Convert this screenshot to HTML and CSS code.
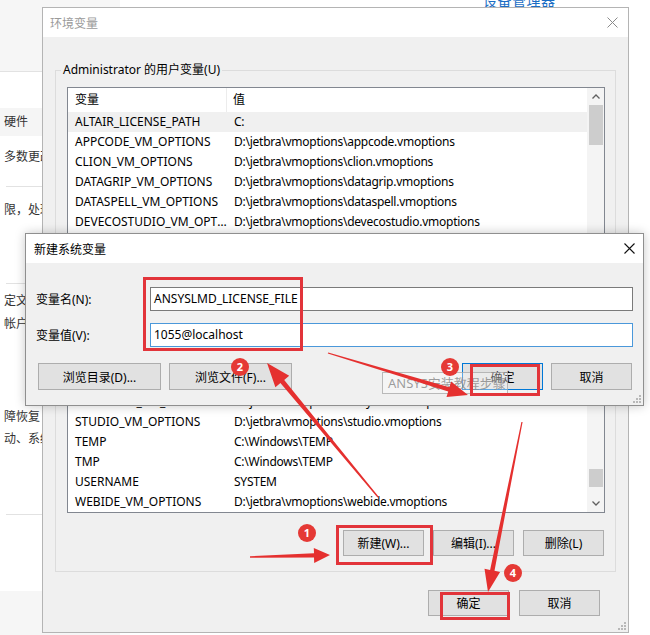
FILE: index.html
```html
<!DOCTYPE html>
<html lang="zh-CN">
<head>
<meta charset="utf-8">
<title>环境变量</title>
<link rel="stylesheet" href="styles.css">
</head>
<body>
<div class="desktop">
  <div class="side">
    <div class="side-top"></div>
    <div class="side-band">硬件</div>
    <div class="side-row r42">多数更改</div>
    <div class="side-line l8"></div>
    <div class="side-row r46">限，处理</div>
    <div class="side-line l50"></div>
    <div class="side-row r22 m6">定文件</div>
    <div class="side-row r24">帐户</div>
    <div class="side-row r22 m70">障恢复</div>
    <div class="side-row r22">动、系统</div>
    <div class="side-line l64"></div>
    <div class="side-foot"></div>
  </div>

  <div class="top-link">设备管理器</div>

  <div class="win win-main">
    <div class="titlebar inactive">
      <span class="title">环境变量</span>
      <svg class="close" width="11" height="11" viewBox="0 0 11 11"><path d="M0.5 0.5L10.5 10.5M10.5 0.5L0.5 10.5" stroke="#8a8a8a" stroke-width="1"/></svg>
    </div>
    <div class="win-body main-body">
      <fieldset class="group">
        <legend>Administrator 的用户变量(U)</legend>
        <div class="listbox">
          <div class="list-main">
            <div class="lrow head"><span class="c1">变量</span><span class="c2">值</span></div>
            <div class="lrow sel"><span class="c1">ALTAIR_LICENSE_PATH</span><span class="c2">C:</span></div>
            <div class="lrow"><span class="c1">APPCODE_VM_OPTIONS</span><span class="c2">D:\jetbra\vmoptions\appcode.vmoptions</span></div>
            <div class="lrow"><span class="c1">CLION_VM_OPTIONS</span><span class="c2">D:\jetbra\vmoptions\clion.vmoptions</span></div>
            <div class="lrow"><span class="c1">DATAGRIP_VM_OPTIONS</span><span class="c2">D:\jetbra\vmoptions\datagrip.vmoptions</span></div>
            <div class="lrow"><span class="c1">DATASPELL_VM_OPTIONS</span><span class="c2">D:\jetbra\vmoptions\dataspell.vmoptions</span></div>
            <div class="lrow"><span class="c1">DEVECOSTUDIO_VM_OPTIONS</span><span class="c2">D:\jetbra\vmoptions\devecostudio.vmoptions</span></div>
            <div class="lrow"><span class="c1">GATEWAY_VM_OPTIONS</span><span class="c2">D:\jetbra\vmoptions\gateway.vmoptions</span></div>
            <div class="lrow"><span class="c1">GOLAND_VM_OPTIONS</span><span class="c2">D:\jetbra\vmoptions\goland.vmoptions</span></div>
            <div class="lrow"><span class="c1">IDEA_VM_OPTIONS</span><span class="c2">D:\jetbra\vmoptions\idea.vmoptions</span></div>
            <div class="lrow"><span class="c1">JETBRAINSCLIENT_VM_OPTIONS</span><span class="c2">D:\jetbra\vmoptions\jetbrainsclient.vmoptions</span></div>
            <div class="lrow"><span class="c1">JETBRAINS_CLIENT_VM_OPTIONS</span><span class="c2">D:\jetbra\vmoptions\jetbrains_client.vmoptions</span></div>
            <div class="lrow"><span class="c1">PHPSTORM_VM_OPTIONS</span><span class="c2">D:\jetbra\vmoptions\phpstorm.vmoptions</span></div>
            <div class="lrow"><span class="c1">PYCHARM_VM_OPTIONS</span><span class="c2">D:\jetbra\vmoptions\pycharm.vmoptions</span></div>
            <div class="lrow"><span class="c1">RIDER_VM_OPTIONS</span><span class="c2">D:\jetbra\vmoptions\rider.vmoptions</span></div>
            <div class="lrow"><span class="c1">RUBYMINE_VM_OPTIONS</span><span class="c2">D:\jetbra\vmoptions\rubymine.vmoptions</span></div>
            <div class="lrow"><span class="c1">STUDIO_VM_OPTIONS</span><span class="c2">D:\jetbra\vmoptions\studio.vmoptions</span></div>
            <div class="lrow"><span class="c1">TEMP</span><span class="c2">C:\Windows\TEMP</span></div>
            <div class="lrow"><span class="c1">TMP</span><span class="c2">C:\Windows\TEMP</span></div>
            <div class="lrow"><span class="c1">USERNAME</span><span class="c2">SYSTEM</span></div>
            <div class="lrow"><span class="c1">WEBIDE_VM_OPTIONS</span><span class="c2">D:\jetbra\vmoptions\webide.vmoptions</span></div>
          </div>
          <div class="vscroll">
            <div class="sb-arrow"><svg width="8" height="5" viewBox="0 0 8 5"><path d="M0.5 4.5L4 1L7.5 4.5" fill="none" stroke="#606060" stroke-width="1.3"/></svg></div>
            <div class="sb-track">
              <div class="sb-thumb t1"></div>
              <div class="sb-thumb t2"></div>
            </div>
            <div class="sb-arrow"><svg width="8" height="5" viewBox="0 0 8 5"><path d="M0.5 0.5L4 4L7.5 0.5" fill="none" stroke="#606060" stroke-width="1.3"/></svg></div>
          </div>
        </div>
        <div class="btnrow group-btns">
          <button class="btn">新建(W)...</button>
          <button class="btn">编辑(I)...</button>
          <button class="btn">删除(L)</button>
        </div>
      </fieldset>
      <div class="btnrow main-btns">
        <button class="btn">确定</button>
        <button class="btn">取消</button>
      </div>
    </div>
    <svg class="grip" width="8" height="8" viewBox="0 0 8 8"><g fill="#b8b8b8"><rect x="6" y="0" width="2" height="2"/><rect x="3" y="3" width="2" height="2"/><rect x="6" y="3" width="2" height="2"/><rect x="0" y="6" width="2" height="2"/><rect x="3" y="6" width="2" height="2"/><rect x="6" y="6" width="2" height="2"/></g></svg>
  </div>

  <div class="win win-new">
    <div class="titlebar">
      <span class="title">新建系统变量</span>
      <svg class="close" width="11" height="11" viewBox="0 0 11 11"><path d="M0.5 0.5L10.5 10.5M10.5 0.5L0.5 10.5" stroke="#111" stroke-width="1.1"/></svg>
    </div>
    <div class="win-body new-body">
      <div class="field">
        <label class="flabel">变量名(N):</label>
        <div class="finput">ANSYSLMD_LICENSE_FILE</div>
      </div>
      <div class="field">
        <label class="flabel">变量值(V):</label>
        <div class="finput focus">1055@localhost</div>
      </div>
      <div class="btnrow new-btns">
        <button class="btn wide">浏览目录(D)...</button>
        <button class="btn wide">浏览文件(F)...</button>
        <span class="fill"></span>
        <button class="btn default">确定</button>
        <button class="btn">取消</button>
      </div>
    </div>
    <svg class="grip" width="8" height="8" viewBox="0 0 8 8"><g fill="#b8b8b8"><rect x="6" y="0" width="2" height="2"/><rect x="3" y="3" width="2" height="2"/><rect x="6" y="3" width="2" height="2"/><rect x="0" y="6" width="2" height="2"/><rect x="3" y="6" width="2" height="2"/><rect x="6" y="6" width="2" height="2"/></g></svg>
  </div>

  <div class="watermark">ANSYS安装教程步骤</div>

  <div class="mark mark-a"></div>
  <div class="mark mark-b"></div>
  <div class="mark mark-c"></div>
  <div class="mark mark-d"></div>

  <svg class="arrows" width="650" height="635" viewBox="0 0 650 635">
    <g fill="#e5302f">
      <polygon points="250,557.8 314,557.6 314.2,563 330,555 313.8,547.9 314,553.3 250,556.2"/>
      <polygon points="378.5,496.6 284.2,379.9 289.2,375.8 267,363 275.4,387.2 280.4,383.1 377.5,497.4"/>
      <polygon points="327.8,353.6 448.2,391.4 446.5,397 468,395 451.1,381.6 449.4,387.2 328.2,352.4"/>
      <polygon points="521.4,421.9 490.1,570 484.5,568.8 488,592 500.1,572 494.5,570.8 522.6,422.1"/>
    </g>
  </svg>

  <span class="badge b1">1</span>
  <span class="badge b2">2</span>
  <span class="badge b3">3</span>
  <span class="badge b4">4</span>
</div>
</body>
</html>
```

FILE: styles.css
```css
* { box-sizing: border-box; }

html, body {
  margin: 0;
  padding: 0;
  background: #ffffff;
}

body {
  font-family: "Noto Sans", "Noto Sans CJK SC", sans-serif;
  font-size: 12px;
  color: #000;
}

.desktop {
  position: relative;
  width: 650px;
  height: 635px;
  overflow: hidden;
  background: #ffffff;
}

/* background settings page (left strip) */
.side {
  width: 120px;
  height: 635px;
  display: flex;
  flex-direction: column;
  color: #333;
  font-size: 12px;
}
.side-top {
  height: 72px;
  flex: none;
  background: #f6f6f6;
  border-bottom: 1px solid #e2e2e2;
}
.side-band {
  margin-top: 36px;
  height: 28px;
  line-height: 28px;
  flex: none;
  padding-left: 4px;
  background: #f5f5f5;
}
.side-row {
  flex: none;
  padding-left: 4px;
  white-space: nowrap;
}
.r42 { height: 42px; line-height: 42px; }
.r46 { height: 46px; line-height: 46px; }
.r22 { height: 22px; line-height: 22px; }
.r24 { height: 24px; line-height: 24px; }
.m6 { margin-top: 6px; }
.m70 { margin-top: 70px; }
.side-line {
  flex: none;
  height: 1px;
  background: #e2e2e2;
  margin-left: 6px;
}
.l8 { margin-top: 8px; }
.l50 { margin-top: 50px; }
.l64 { margin-top: 64px; }
.side-foot {
  margin-top: 76px;
  flex: 1;
  background: #f6f6f6;
}

.top-link {
  position: absolute;
  left: 483px;
  top: -10px;
  font-size: 14px;
  color: #1a6dc4;
  letter-spacing: 0.5px;
}

/* windows */
.win {
  position: absolute;
  display: flex;
  flex-direction: column;
  background: #f0f0f0;
  border: 1px solid #a9a9a9;
}
.win-main {
  left: 42px;
  top: 7px;
  width: 587px;
  height: 626px;
  border-color: #b4b4b4;
}
.win-new {
  left: 25px;
  top: 233px;
  width: 619px;
  height: 173px;
  border-color: #8f8f8f;
  box-shadow: 0 0 10px rgba(0, 0, 0, 0.22);
}

.titlebar {
  flex: none;
  height: 29px;
  background: #ffffff;
  display: flex;
  align-items: center;
  justify-content: space-between;
  padding: 0 8px 0 8px;
}
.titlebar.inactive .title { color: #9a9a9a; }
.win-main .titlebar { padding: 0 10px 0 7px; }
.win-new .titlebar { padding: 0 8px 0 8px; }

.win-body {
  flex: 1;
  display: flex;
  flex-direction: column;
}

.grip {
  position: absolute;
  right: 2px;
  bottom: 2px;
}

/* main dialog */
.main-body {
  padding: 25px 12px 0 12px;
}
.group {
  margin: 0;
  border: 1px solid #dcdcdc;
  padding: 9px 10px 15px 11px;
  min-width: 0;
}
.group legend {
  padding: 0 2px;
  margin-left: -6px;
  line-height: 16px;
  color: #000;
}

.listbox {
  height: 426px;
  border: 1px solid #828790;
  background: #fff;
  display: flex;
}
.list-main {
  flex: 1;
  min-width: 0;
  overflow: hidden;
}
.lrow {
  display: flex;
  height: 20px;
  line-height: 20px;
  white-space: nowrap;
}
.lrow.head {
  height: 24px;
  line-height: 24px;
}
.lrow.sel { background: #f0f0f0; }
.c1 {
  flex: none;
  width: 166px;
  padding: 0 6px 0 7px;
  overflow: hidden;
  text-overflow: ellipsis;
}
.head .c1 {
  width: 159px;
  border-right: 1px solid #ececec;
}
.head .c2 { padding-left: 6px; }
.c2 {
  flex: 1;
  overflow: hidden;
  letter-spacing: -0.25px;
}

.vscroll {
  flex: none;
  width: 17px;
  display: flex;
  flex-direction: column;
  background: #f4f4f4;
}
.sb-arrow {
  height: 17px;
  flex: none;
  display: flex;
  align-items: center;
  justify-content: center;
}
.sb-track {
  flex: 1;
  display: flex;
  flex-direction: column;
  align-items: center;
}
.sb-thumb {
  width: 14px;
  background: #cdcdcd;
}
.t1 { height: 40px; }
.t2 { height: 18px; margin-top: auto; margin-bottom: 8px; }

.btnrow {
  display: flex;
  align-items: center;
}
.btn {
  font: inherit;
  color: #000;
  background: #e1e1e1;
  border: 1px solid #adadad;
  padding: 0;
  margin: 0;
  width: 81px;
  height: 26px;
}
.group-btns {
  justify-content: flex-end;
  gap: 9px;
  margin-top: 17px;
  padding-right: 1px;
}
.main-btns {
  justify-content: flex-end;
  gap: 10px;
  margin-top: 18px;
  padding-right: 16px;
}

/* new variable dialog */
.new-body {
  padding: 24px 10px 0 10px;
}
.field {
  display: flex;
  align-items: center;
  height: 24px;
  margin-bottom: 12px;
}
.flabel {
  width: 114px;
  flex: none;
}
.finput {
  flex: 1;
  height: 24px;
  line-height: 22px;
  background: #fff;
  border: 1px solid #7a7a7a;
  padding-left: 3px;
  white-space: nowrap;
}
.finput.focus { border-color: #4a98da; }
.new-btns {
  margin-top: 4px;
  padding-left: 2px;
  padding-right: 1px;
  gap: 8px;
}
.new-btns .btn { height: 27px; }
.btn.wide { width: 123px; }
.btn.default { border-color: #0078d7; }
.fill { flex: 1; }

/* annotations */
.watermark {
  position: absolute;
  left: 382px;
  top: 372px;
  width: 126px;
  height: 22px;
  line-height: 20px;
  border: 1px solid rgba(160, 160, 160, 0.7);
  background: rgba(255, 255, 255, 0.35);
  color: rgba(140, 140, 140, 0.85);
  font-size: 13px;
  padding-left: 5px;
  white-space: nowrap;
}

.mark {
  position: absolute;
  border: 3px solid #e2343a;
}
.mark-a { left: 143px; top: 277px; width: 160px; height: 74px; }
.mark-b { left: 470px; top: 364px; width: 70px; height: 32px; }
.mark-c { left: 336px; top: 525px; width: 97px; height: 40px; }
.mark-d { left: 440px; top: 592px; width: 70px; height: 28px; }

.arrows {
  position: absolute;
  left: 0;
  top: 0;
  pointer-events: none;
}

.badge {
  position: absolute;
  width: 18px;
  height: 18px;
  border-radius: 50%;
  background: #e53935;
  color: #fff;
  font-size: 11px;
  font-weight: bold;
  line-height: 18px;
  text-align: center;
}
.b1 { left: 298px; top: 524px; }
.b2 { left: 231px; top: 358px; }
.b3 { left: 441px; top: 358px; }
.b4 { left: 504px; top: 564px; }
```
